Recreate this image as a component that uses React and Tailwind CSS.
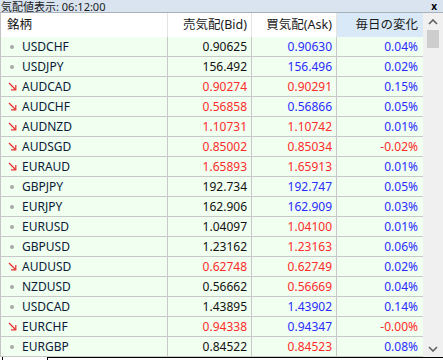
import React from "react";

// Market watch rows: symbol, bid, ask, daily change, trend, colours.
const rows = [
  { sym: "USDCHF", bid: "0.90625", ask: "0.90630", chg: "0.04%", down: false, bc: "k", ac: "b", cc: "b" },
  { sym: "USDJPY", bid: "156.492", ask: "156.496", chg: "0.02%", down: false, bc: "k", ac: "b", cc: "b" },
  { sym: "AUDCAD", bid: "0.90274", ask: "0.90291", chg: "0.15%", down: true, bc: "r", ac: "r", cc: "b" },
  { sym: "AUDCHF", bid: "0.56858", ask: "0.56866", chg: "0.05%", down: true, bc: "r", ac: "b", cc: "b" },
  { sym: "AUDNZD", bid: "1.10731", ask: "1.10742", chg: "0.01%", down: true, bc: "r", ac: "r", cc: "b" },
  { sym: "AUDSGD", bid: "0.85002", ask: "0.85034", chg: "-0.02%", down: true, bc: "r", ac: "r", cc: "r" },
  { sym: "EURAUD", bid: "1.65893", ask: "1.65913", chg: "0.01%", down: true, bc: "r", ac: "r", cc: "b" },
  { sym: "GBPJPY", bid: "192.734", ask: "192.747", chg: "0.05%", down: false, bc: "k", ac: "b", cc: "b" },
  { sym: "EURJPY", bid: "162.906", ask: "162.909", chg: "0.03%", down: false, bc: "k", ac: "b", cc: "b" },
  { sym: "EURUSD", bid: "1.04097", ask: "1.04100", chg: "0.01%", down: false, bc: "k", ac: "r", cc: "b" },
  { sym: "GBPUSD", bid: "1.23162", ask: "1.23163", chg: "0.06%", down: false, bc: "k", ac: "r", cc: "b" },
  { sym: "AUDUSD", bid: "0.62748", ask: "0.62749", chg: "0.02%", down: true, bc: "r", ac: "r", cc: "b" },
  { sym: "NZDUSD", bid: "0.56662", ask: "0.56669", chg: "0.04%", down: false, bc: "k", ac: "r", cc: "b" },
  { sym: "USDCAD", bid: "1.43895", ask: "1.43902", chg: "0.14%", down: false, bc: "k", ac: "b", cc: "b" },
  { sym: "EURCHF", bid: "0.94338", ask: "0.94347", chg: "-0.00%", down: true, bc: "r", ac: "b", cc: "r" },
  { sym: "EURGBP", bid: "0.84522", ask: "0.84523", chg: "0.08%", down: false, bc: "k", ac: "r", cc: "b" },
];

const colour = {
  k: "text-[#111111]",
  r: "text-[#ff2b2b]",
  b: "text-[#2b2bff]",
};

function DownArrow() {
  return (
    <svg width="9" height="9" viewBox="0 0 9 9" className="block">
      <path d="M1 1 L7.5 7.5" stroke="#e83030" strokeWidth="1.2" fill="none" />
      <path d="M3 7.8 H7.8 V3" stroke="#e83030" strokeWidth="1.2" fill="none" />
    </svg>
  );
}

function Chevron({ up }) {
  return (
    <svg width="10" height="6" viewBox="0 0 10 6" className="block">
      <path
        d={up ? "M1 5 L5 1 L9 5" : "M1 1 L5 5 L9 1"}
        stroke="#606060"
        strokeWidth="1.6"
        fill="none"
      />
    </svg>
  );
}

export default function App() {
  const font = { fontFamily: '"Noto Sans", "Noto Sans CJK JP", sans-serif' };
  return (
    <div
      className="w-[443px] h-[360px] bg-white overflow-hidden flex flex-col text-[12px]"
      style={font}
    >
      {/* title bar */}
      <div className="h-[13px] shrink-0 bg-[#d9e4f0] border-b border-[#a8b0b8] flex items-center justify-between">
        <span className="pl-[1px] leading-[11px] text-[#1a1a1a] text-[11px]">
          気配値表示: 06:12:00
        </span>
        <span className="pr-[6px] leading-[11px] font-bold text-[10px] text-black">x</span>
      </div>

      <div className="flex h-[344px] shrink-0">
        {/* table */}
        <div className="w-[423px] border-l border-[#c4c4c4]">
          <div className="grid grid-cols-[167px_84px_85px_86px] h-[24px] bg-white text-[12.5px]">
            <div className="border-r border-[#e4e4e4] pl-[6px] flex items-center text-[#1a1a1a]">銘柄</div>
            <div className="border-r border-[#e4e4e4] pr-[4px] flex items-center justify-end text-[#1a1a1a]">売気配(Bid)</div>
            <div className="border-r border-[#e4e4e4] pr-[4px] flex items-center justify-end text-[#1a1a1a]">買気配(Ask)</div>
            <div className="bg-[#d9e9f8] pr-[5px] flex items-center justify-end text-[#1a1a1a]">毎日の変化</div>
          </div>
          {rows.map((r) => (
            <div
              key={r.sym}
              className="grid grid-cols-[167px_84px_85px_86px] h-[20px] bg-[#f0fff0] border-b border-[#c8c8c8]"
            >
              <div className="border-r border-[#c8c8c8] flex items-center">
                <span className="w-[21px] flex justify-center pl-[1px]">
                  {r.down ? (
                    <DownArrow />
                  ) : (
                    <span className="block w-[4px] h-[4px] rounded-full bg-[#a8a8a8]" />
                  )}
                </span>
                <span className="text-[#0c1c38]">{r.sym}</span>
              </div>
              <div className={`border-r border-[#c8c8c8] pr-[4px] flex items-center justify-end ${colour[r.bc]}`}>
                {r.bid}
              </div>
              <div className={`border-r border-[#c8c8c8] pr-[4px] flex items-center justify-end ${colour[r.ac]}`}>
                {r.ask}
              </div>
              <div className={`pr-[5px] flex items-center justify-end ${colour[r.cc]}`}>{r.chg}</div>
            </div>
          ))}
        </div>

        {/* scrollbar */}
        <div className="w-[20px] bg-[#f0f0f0] flex flex-col items-center">
          <div className="h-[17px] flex items-center justify-center">
            <Chevron up />
          </div>
          <div className="w-[12px] h-[18px] bg-[#cdcdcd]" />
          <div className="flex-1" />
          <div className="h-[17px] flex items-center justify-center">
            <Chevron />
          </div>
        </div>
      </div>

      {/* tab strip */}
      <div className="flex-1 flex">
        <div className="w-[46px] border-l border-r border-black ml-[2px]" />
        <div className="flex-1 border-t border-black" />
      </div>
    </div>
  );
}
